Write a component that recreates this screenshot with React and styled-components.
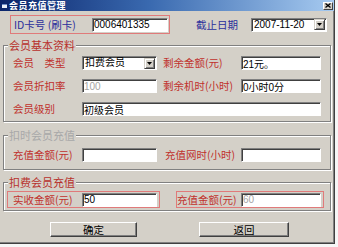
import React from "react";
import styled, { createGlobalStyle } from "styled-components";

const GlobalStyle = createGlobalStyle`
  html, body {
    margin: 0;
    padding: 0;
    background: #f6f6f6;
  }
  body {
    font-family: "Noto Sans CJK SC", "Liberation Sans", sans-serif;
  }
`;

const Window = styled.div`
  width: 335px;
  height: 244px;
  box-sizing: border-box;
  background: #d4d0c8;
  border-right: 1px solid #404040;
  border-bottom: 1px solid #404040;
  box-shadow: inset -1px -1px 0 #808080;
  display: flex;
  flex-direction: column;
  overflow: hidden;
`;

const TitleBar = styled.div`
  height: 11px;
  display: flex;
  align-items: center;
  padding: 0 1px 0 2px;
  background: linear-gradient(90deg, #0a246a 0%, #3a6ab0 45%, #a6caf0 100%);
`;

const TitleText = styled.span`
  margin-left: 2px;
  color: #fff;
  font-size: 9px;
  font-weight: bold;
  line-height: 11px;
  letter-spacing: 0.5px;
`;

const CloseButton = styled.div`
  margin-left: auto;
  width: 10px;
  height: 8px;
  box-sizing: border-box;
  background: #d4d0c8;
  border-top: 1px solid #fff;
  border-left: 1px solid #fff;
  border-right: 1px solid #404040;
  border-bottom: 1px solid #404040;
  display: flex;
  align-items: center;
  justify-content: center;
`;

const Content = styled.div`
  padding: 0 3px;
  display: flex;
  flex-direction: column;
`;

const TopRow = styled.div`
  margin-top: 4px;
  height: 19px;
  display: flex;
  align-items: center;
`;

const RedBox = styled.div`
  box-sizing: border-box;
  width: ${(p) => p.$w}px;
  height: ${(p) => p.$h || 17}px;
  margin-left: ${(p) => p.$ml || 0}px;
  border: 1px solid #e07a7a;
  display: flex;
  align-items: center;
`;

const Label = styled.span`
  box-sizing: border-box;
  flex: none;
  width: ${(p) => p.$w}px;
  padding-left: ${(p) => p.$pl || 0}px;
  margin-left: ${(p) => p.$ml || 0}px;
  font-size: 10.5px;
  line-height: 14px;
  white-space: pre;
  color: ${(p) => (p.$blue ? "#2b2f9c" : "#c0302c")};
`;

const Input = styled.input`
  box-sizing: border-box;
  flex: none;
  width: ${(p) => p.$w}px;
  height: 14px;
  margin: 0;
  padding: 0 0 0 1px;
  background: #fff;
  border-top: 1px solid #808080;
  border-left: 1px solid #808080;
  border-right: 1px solid #fff;
  border-bottom: 1px solid #fff;
  box-shadow: inset 1px 1px 0 #404040;
  outline: none;
  font-family: "Liberation Sans", "Noto Sans CJK SC", sans-serif;
  font-size: 10px;
  line-height: 12px;
  color: ${(p) => (p.$dim ? "#a4a4a4" : "#000")};
`;

const Combo = styled.div`
  box-sizing: border-box;
  flex: none;
  width: ${(p) => p.$w}px;
  height: 14px;
  background: #fff;
  border-top: 1px solid #808080;
  border-left: 1px solid #808080;
  border-right: 1px solid #fff;
  border-bottom: 1px solid #fff;
  box-shadow: inset 1px 1px 0 #404040;
  display: flex;
  align-items: center;
  padding-left: 2px;
  font-family: "Liberation Sans", "Noto Sans CJK SC", sans-serif;
  font-size: 10px;
  color: #000;
`;

const ComboText = styled.span`
  flex: 1;
  line-height: 12px;
`;

const ArrowButton = styled.div`
  box-sizing: border-box;
  width: 11px;
  height: 11px;
  margin-right: 1px;
  background: #d4d0c8;
  border-top: 1px solid #d4d0c8;
  border-left: 1px solid #d4d0c8;
  border-right: 1px solid #404040;
  border-bottom: 1px solid #404040;
  box-shadow: inset 1px 1px 0 #fff, inset -1px -1px 0 #808080;
  display: flex;
  align-items: center;
  justify-content: center;
`;

const Group = styled.fieldset`
  margin: ${(p) => p.$mt}px 0 0;
  padding: 0;
  min-width: 0;
  border: 1px solid #808080;
  box-shadow: 1px 1px 0 #fff, inset 1px 1px 0 #fff;
`;

const Legend = styled.legend`
  margin-left: 4px;
  padding: 0 1px;
  font-size: 11px;
  line-height: 11px;
  background: #d4d0c8;
  color: ${(p) => (p.$off ? "#a8a8a8" : "#b8302c")};
`;

const GroupBody = styled.div`
  padding: ${(p) => p.$pt}px 0 ${(p) => p.$pb}px ${(p) => p.$pl}px;
  display: flex;
  flex-direction: column;
  gap: 9px;
`;

const Row = styled.div`
  display: flex;
  align-items: center;
  height: ${(p) => p.$h || 14}px;
`;

const ButtonRow = styled.div`
  margin-top: 11px;
  display: flex;
`;

const Button = styled.button`
  box-sizing: border-box;
  width: ${(p) => p.$w}px;
  height: 15px;
  margin: 0 0 0 ${(p) => p.$ml}px;
  padding: 0;
  background: #d4d0c8;
  border-top: 1px solid #fff;
  border-left: 1px solid #fff;
  border-right: 1px solid #404040;
  border-bottom: 1px solid #404040;
  box-shadow: inset -1px -1px 0 #808080;
  font-family: "Noto Sans CJK SC", sans-serif;
  font-size: 10.5px;
  line-height: 12px;
  color: #000;
`;

function Arrow() {
  return (
    <svg width="5" height="3" viewBox="0 0 5 3">
      <path d="M0 0h5L2.5 3z" fill="#000" />
    </svg>
  );
}

function Select({ w, value }) {
  return (
    <Combo $w={w}>
      <ComboText>{value}</ComboText>
      <ArrowButton>
        <Arrow />
      </ArrowButton>
    </Combo>
  );
}

export default function App() {
  return (
    <>
      <GlobalStyle />
      <Window>
        <TitleBar>
          <svg width="5" height="4" viewBox="0 0 5 4">
            <rect x="0" y="0" width="5" height="4" fill="#e8eef8" />
            <rect x="0" y="0" width="5" height="1" fill="#6f8fc8" />
          </svg>
          <TitleText>会员充值管理</TitleText>
          <CloseButton>
            <svg width="6" height="5" viewBox="0 0 6 5">
              <path d="M0.5 0.5L5.5 4.5M5.5 0.5L0.5 4.5" stroke="#000" strokeWidth="1.3" />
            </svg>
          </CloseButton>
        </TitleBar>

        <Content>
          <TopRow>
            <RedBox $w={160} $h={19} $ml={7}>
              <Label $blue $w={81} $pl={3}>ID卡号 (刷卡)</Label>
              <Input $w={76} readOnly defaultValue="0006401335" />
            </RedBox>
            <Label $blue $w={55} $ml={26}>截止日期</Label>
            <Select w={76} value="2007-11-20" />
          </TopRow>

          <Group $mt={6}>
            <Legend>会员基本资料</Legend>
            <GroupBody $pt={5} $pb={5} $pl={9}>
              <Row>
                <Label $w={69}>会员　类型</Label>
                <Select w={75} value="扣费会员" />
                <Label $w={78} $ml={6}>剩余金额(元)</Label>
                <Input $w={80} readOnly defaultValue="21元。" />
              </Row>
              <Row>
                <Label $w={69}>会员折扣率</Label>
                <Input $w={75} $dim readOnly defaultValue="100" />
                <Label $w={78} $ml={6}>剩余机时(小时)</Label>
                <Input $w={80} readOnly defaultValue="0小时0分" />
              </Row>
              <Row>
                <Label $w={69}>会员级别</Label>
                <Input $w={239} readOnly defaultValue="初级会员" />
              </Row>
            </GroupBody>
          </Group>

          <Group $mt={8}>
            <Legend $off>扣时会员充值</Legend>
            <GroupBody $pt={7} $pb={7} $pl={9}>
              <Row>
                <Label $w={69}>充值金额(元)</Label>
                <Input $w={75} readOnly defaultValue="" />
                <Label $w={76} $ml={8}>充值网时(小时)</Label>
                <Input $w={80} readOnly defaultValue="" />
              </Row>
            </GroupBody>
          </Group>

          <Group $mt={7}>
            <Legend>扣费会员充值</Legend>
            <GroupBody $pt={3} $pb={2} $pl={3}>
              <Row $h={17}>
                <RedBox $w={153}>
                  <Label $w={74} $pl={5}>实收金额(元)</Label>
                  <Input $w={75} readOnly defaultValue="50" />
                </RedBox>
                <RedBox $w={148} $ml={16}>
                  <Label $w={64}>充值金额(元)</Label>
                  <Input $w={80} $dim readOnly defaultValue="60" />
                </RedBox>
              </Row>
            </GroupBody>
          </Group>

          <ButtonRow>
            <Button $w={87} $ml={47}>确定</Button>
            <Button $w={90} $ml={62}>返回</Button>
          </ButtonRow>
        </Content>
      </Window>
    </>
  );
}
